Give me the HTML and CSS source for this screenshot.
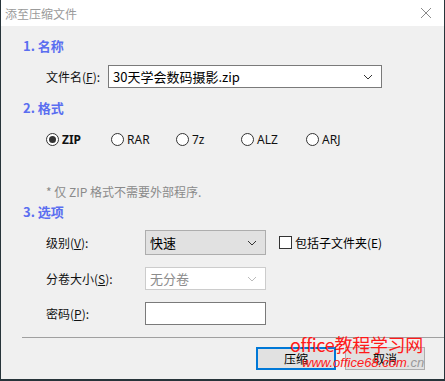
FILE: index.html
```html
<!DOCTYPE html>
<html lang="zh-CN">
<head>
    <meta charset="utf-8" />
    <title>添至压缩文件</title>
    <link rel="stylesheet" href="styles.css">
</head>
<body>
    <div class="dialog">
        <div class="title-bar">
            <span class="title-text">添至压缩文件</span>
            <svg class="close-icon" width="12" height="12" viewBox="0 0 12 12">
                <path d="M1 1 L11 11 M11 1 L1 11" stroke="#8a8a8a" stroke-width="1" fill="none" />
            </svg>
        </div>

        <div class="dialog-body">
            <h3 class="section-title">1. 名称</h3>
            <div class="row name-row">
                <label class="field-label">文件名(<u>F</u>):</label>
                <div class="combo combo-name">
                    <span>30天学会数码摄影.zip</span>
                    <svg class="chevron" width="10" height="6" viewBox="0 0 10 6">
                        <path d="M1 1 L5 5 L9 1" stroke="#333" fill="none" />
                    </svg>
                </div>
            </div>

            <h3 class="section-title">2. 格式</h3>
            <div class="format-row">
                <div class="radio-item checked"><span class="radio"></span><span class="radio-label">ZIP</span></div>
                <div class="radio-item"><span class="radio"></span><span class="radio-label">RAR</span></div>
                <div class="radio-item"><span class="radio"></span><span class="radio-label">7z</span></div>
                <div class="radio-item"><span class="radio"></span><span class="radio-label">ALZ</span></div>
                <div class="radio-item"><span class="radio"></span><span class="radio-label">ARJ</span></div>
            </div>
            <p class="format-note">* 仅 ZIP 格式不需要外部程序.</p>

            <h3 class="section-title section-options">3. 选项</h3>
            <div class="options">
                <div class="row option-row">
                    <label class="field-label option-label">级别(<u>V</u>):</label>
                    <div class="combo combo-level">
                        <span>快速</span>
                        <svg class="chevron" width="10" height="6" viewBox="0 0 10 6">
                            <path d="M1 1 L5 5 L9 1" stroke="#333" fill="none" />
                        </svg>
                    </div>
                    <div class="checkbox-item">
                        <span class="checkbox"></span>
                        <span>包括子文件夹(E)</span>
                    </div>
                </div>
                <div class="row option-row">
                    <label class="field-label option-label">分卷大小(<u>S</u>):</label>
                    <div class="combo combo-disabled">
                        <span>无分卷</span>
                        <svg class="chevron" width="10" height="6" viewBox="0 0 10 6">
                            <path d="M1 1 L5 5 L9 1" stroke="#bbb" fill="none" />
                        </svg>
                    </div>
                </div>
                <div class="row option-row">
                    <label class="field-label option-label">密码(<u>P</u>):</label>
                    <div class="text-input"></div>
                </div>
            </div>
        </div>

        <div class="dialog-footer">
            <button class="btn btn-default">压缩</button>
            <button class="btn">取消</button>
        </div>

        <div class="watermark">
            <div class="wm-title">office教程学习网</div>
            <div class="wm-url">www.office68.com<span class="wm-cn">.cn</span></div>
        </div>
    </div>
</body>
</html>
```

FILE: styles.css
```css
* {
    margin: 0;
    padding: 0;
    box-sizing: border-box;
}

body {
    width: 445px;
    height: 381px;
    background: #27343a;
    font-family: "Noto Sans", "Noto Sans CJK SC", sans-serif;
    font-size: 12px;
    color: #000;
    overflow: hidden;
}

.dialog {
    position: relative;
    width: 443px;
    height: 379px;
    margin-left: 1px;
    background: #f0f0f0;
    display: flex;
    flex-direction: column;
}

.title-bar {
    height: 26px;
    background: #fff;
    display: flex;
    align-items: center;
    justify-content: space-between;
    padding: 0 12px 0 4px;
}

.title-text {
    color: #9a9a9a;
    font-size: 12px;
    font-family: "Noto Sans CJK SC", sans-serif;
}

.dialog-body {
    padding: 11px 0 0 22px;
    flex: 1;
}

.section-title {
    color: #5a6ef0;
    font-size: 13px;
    font-weight: 700;
    font-family: "Noto Sans CJK SC", sans-serif;
    line-height: 18px;
}

.section-options {
    margin-top: 2px;
}

.row {
    display: flex;
    align-items: center;
}

.name-row {
    margin: 10px 0 11px 23px;
}

.field-label {
    font-family: "Noto Sans CJK SC", sans-serif;
    color: #111;
}

.field-label u {
    text-underline-offset: 1px;
}

.name-row .field-label {
    width: 62px;
}

.combo {
    height: 23px;
    display: flex;
    align-items: center;
    justify-content: space-between;
    padding: 0 8px 0 4px;
    font-family: "Noto Sans CJK SC", sans-serif;
    font-size: 13px;
}

.combo-name {
    width: 274px;
    background: #fff;
    border: 1px solid #7a7a7a;
}

.format-row {
    display: flex;
    margin: 14px 0 0 23px;
}

.radio-item {
    width: 65px;
    display: flex;
    align-items: center;
    gap: 3px;
}

.radio {
    width: 13px;
    height: 13px;
    border: 1px solid #333;
    border-radius: 50%;
    background: #fff;
    display: flex;
    align-items: center;
    justify-content: center;
}

.checked .radio::after {
    content: '';
    width: 7px;
    height: 7px;
    border-radius: 50%;
    background: #333;
}

.radio-label {
    font-size: 12px;
    color: #111;
}

.checked .radio-label {
    font-weight: 700;
}

.format-note {
    margin: 35px 0 0 23px;
    color: #8a8a8a;
    font-family: "Noto Sans CJK SC", sans-serif;
    line-height: 18px;
}

.options {
    margin: 9px 0 0 23px;
    display: flex;
    flex-direction: column;
    gap: 12px;
}

.option-label {
    width: 99px;
}

.combo-level {
    width: 121px;
    height: 25px;
    background: #e1e1e1;
    border: 1px solid #adadad;
}

.combo-disabled {
    width: 121px;
    height: 23px;
    background: #fff;
    border: 1px solid #ccc;
    color: #8c8c8c;
}

.text-input {
    width: 121px;
    height: 23px;
    background: #fff;
    border: 1px solid #7a7a7a;
}

.checkbox-item {
    display: flex;
    align-items: center;
    gap: 3px;
    margin-left: 13px;
    font-family: "Noto Sans CJK SC", sans-serif;
}

.checkbox {
    width: 13px;
    height: 13px;
    border: 1px solid #333;
    background: #fff;
}

.dialog-footer {
    margin-left: 21px;
    border-top: 1px solid #a0a0a0;
    height: 42px;
    display: flex;
    justify-content: flex-end;
    align-items: flex-start;
    gap: 9px;
    padding: 9px 19px 0 0;
}

.btn {
    width: 80px;
    height: 23px;
    background: #e1e1e1;
    border: 1px solid #adadad;
    font-family: "Noto Sans CJK SC", sans-serif;
    font-size: 12px;
    color: #000;
}

.btn-default {
    border: 2px solid #0078d7;
}

.watermark {
    position: absolute;
    left: 289px;
    top: 334px;
    pointer-events: none;
}

.wm-title {
    color: #ff1a1a;
    font-family: "Noto Sans CJK SC", sans-serif;
    font-size: 18px;
    line-height: 20px;
    letter-spacing: -0.3px;
}

.wm-url {
    margin: 2px 0 0 12px;
    color: #ff1a1a;
    font-family: "Liberation Sans", sans-serif;
    font-size: 13px;
    line-height: 14px;
    font-style: italic;
}

.wm-cn {
    color: #999;
}
```
